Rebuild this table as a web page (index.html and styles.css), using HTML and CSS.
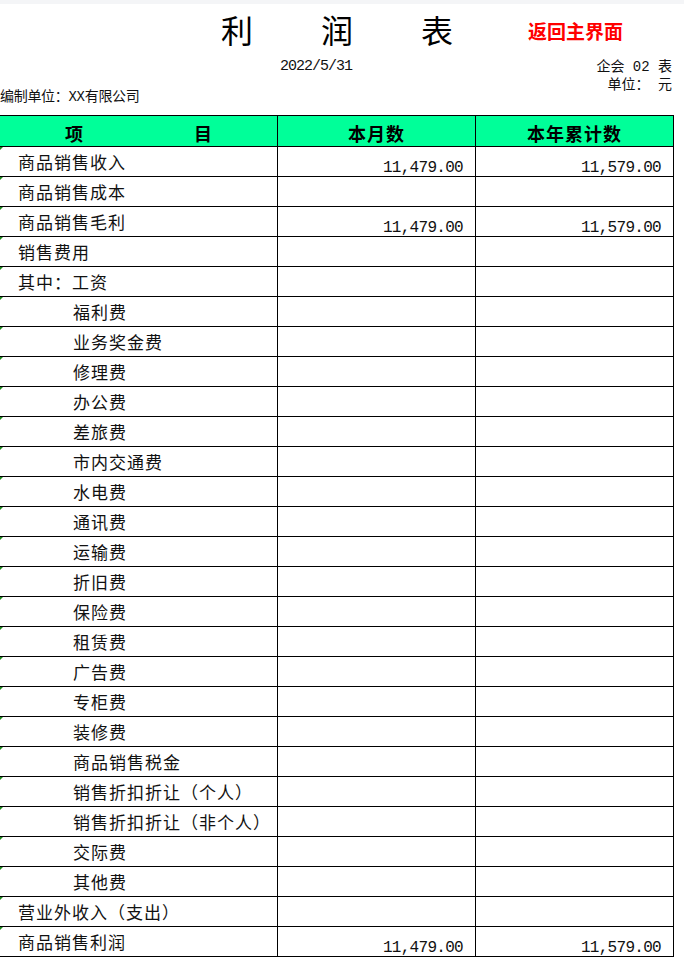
FILE: index.html
```html
<!DOCTYPE html>
<html lang="zh-CN">
<head>
<meta charset="utf-8">
<title>利润表</title>
<link rel="stylesheet" href="styles.css">
</head>
<body>
<div class="band"></div>
<div class="title-row">
  <div class="title">
    <span>利</span><span>润</span><span>表</span>
  </div>
  <a class="back" href="#">返回主界面</a>
</div>
<div class="meta">
  <div class="meta-left">编制单位：XX有限公司</div>
  <div class="meta-date">2022/5/31</div>
  <div class="meta-right">
    <div>企会 02 表</div>
    <div>单位： 元</div>
  </div>
</div>
<div class="sheet">
  <div class="row head">
    <div class="cell c1"><span>项</span><span>目</span></div>
    <div class="cell c2">本月数</div>
    <div class="cell c3">本年累计数</div>
  </div>
  <div class="row"><div class="cell c1">商品销售收入</div><div class="cell num">11,479.00</div><div class="cell num">11,579.00</div></div>
  <div class="row"><div class="cell c1">商品销售成本</div><div class="cell num"></div><div class="cell num"></div></div>
  <div class="row"><div class="cell c1">商品销售毛利</div><div class="cell num">11,479.00</div><div class="cell num">11,579.00</div></div>
  <div class="row"><div class="cell c1">销售费用</div><div class="cell num"></div><div class="cell num"></div></div>
  <div class="row"><div class="cell c1">其中：工资</div><div class="cell num"></div><div class="cell num"></div></div>
  <div class="row"><div class="cell c1 sub">福利费</div><div class="cell num"></div><div class="cell num"></div></div>
  <div class="row"><div class="cell c1 sub">业务奖金费</div><div class="cell num"></div><div class="cell num"></div></div>
  <div class="row"><div class="cell c1 sub">修理费</div><div class="cell num"></div><div class="cell num"></div></div>
  <div class="row"><div class="cell c1 sub">办公费</div><div class="cell num"></div><div class="cell num"></div></div>
  <div class="row"><div class="cell c1 sub">差旅费</div><div class="cell num"></div><div class="cell num"></div></div>
  <div class="row"><div class="cell c1 sub">市内交通费</div><div class="cell num"></div><div class="cell num"></div></div>
  <div class="row"><div class="cell c1 sub">水电费</div><div class="cell num"></div><div class="cell num"></div></div>
  <div class="row"><div class="cell c1 sub">通讯费</div><div class="cell num"></div><div class="cell num"></div></div>
  <div class="row"><div class="cell c1 sub">运输费</div><div class="cell num"></div><div class="cell num"></div></div>
  <div class="row"><div class="cell c1 sub">折旧费</div><div class="cell num"></div><div class="cell num"></div></div>
  <div class="row"><div class="cell c1 sub">保险费</div><div class="cell num"></div><div class="cell num"></div></div>
  <div class="row"><div class="cell c1 sub">租赁费</div><div class="cell num"></div><div class="cell num"></div></div>
  <div class="row"><div class="cell c1 sub">广告费</div><div class="cell num"></div><div class="cell num"></div></div>
  <div class="row"><div class="cell c1 sub">专柜费</div><div class="cell num"></div><div class="cell num"></div></div>
  <div class="row"><div class="cell c1 sub">装修费</div><div class="cell num"></div><div class="cell num"></div></div>
  <div class="row"><div class="cell c1 sub">商品销售税金</div><div class="cell num"></div><div class="cell num"></div></div>
  <div class="row"><div class="cell c1 sub">销售折扣折让（个人）</div><div class="cell num"></div><div class="cell num"></div></div>
  <div class="row"><div class="cell c1 sub">销售折扣折让（非个人）</div><div class="cell num"></div><div class="cell num"></div></div>
  <div class="row"><div class="cell c1 sub">交际费</div><div class="cell num"></div><div class="cell num"></div></div>
  <div class="row"><div class="cell c1 sub">其他费</div><div class="cell num"></div><div class="cell num"></div></div>
  <div class="row"><div class="cell c1">营业外收入（支出）</div><div class="cell num"></div><div class="cell num"></div></div>
  <div class="row"><div class="cell c1">商品销售利润</div><div class="cell num">11,479.00</div><div class="cell num">11,579.00</div></div>
</div>
</body>
</html>
```

FILE: styles.css
```css
html, body {
  margin: 0;
  padding: 0;
  background: #ffffff;
  color: #111;
  font-family: "Noto Sans CJK SC", "Noto Sans", sans-serif;
}

.band {
  height: 4px;
  background: #f4f5f7;
}

.title-row {
  height: 50px;
  display: flex;
  align-items: center;
  padding-left: 221px;
}

.title {
  display: flex;
  gap: 68px;
  font-size: 32px;
  line-height: 40px;
  font-weight: 400;
  color: #000;
}

.back {
  margin-left: 75px;
  margin-top: 4px;
  font-size: 19px;
  font-weight: 700;
  color: #ff0000;
  text-decoration: none;
  line-height: 24px;
}

.meta {
  height: 61px;
  display: grid;
  grid-template-columns: 280px 200px 1fr;
  font-family: "Liberation Mono", "Noto Sans CJK SC", monospace;
  font-size: 14px;
  line-height: 18px;
  color: #111;
}

.meta-left {
  padding-top: 34px;
  letter-spacing: -0.3px;
}

.meta-date {
  padding-top: 4px;
  font-size: 15px;
  letter-spacing: -1px;
}

.meta-right {
  padding-top: 4px;
  padding-right: 12px;
  text-align: right;
}

.sheet {
  width: 674px;
}

.row {
  display: grid;
  grid-template-columns: 278px 198px 198px;
  height: 30px;
  box-sizing: border-box;
  border-bottom: 1px solid #000;
}

.row.head {
  height: 32px;
  border-top: 1px solid #000;
  background: #00ff99;
}

.cell {
  position: relative;
  box-sizing: border-box;
  border-right: 1px solid #000;
  display: flex;
  align-items: center;
  font-size: 17px;
  letter-spacing: 1px;
  white-space: nowrap;
}

.row:not(.head) .c1::before {
  content: "";
  position: absolute;
  left: 0;
  top: 0;
  width: 0;
  height: 0;
  border-top: 3px solid #1a8a1a;
  border-right: 3px solid transparent;
}

.c1 {
  padding-left: 18px;
}

.c1.sub {
  padding-left: 73px;
}

.head .cell {
  font-weight: 700;
  font-size: 18px;
  color: #000;
  justify-content: center;
  padding-top: 3px;
  letter-spacing: 1px;
}

.head .c1 {
  justify-content: flex-start;
  padding-left: 65px;
  gap: 110px;
}

.num {
  justify-content: flex-end;
  align-items: flex-end;
  padding-right: 12px;
  font-family: "Liberation Mono", monospace;
  font-size: 16px;
  line-height: 16px;
  letter-spacing: -0.7px;
}
```
